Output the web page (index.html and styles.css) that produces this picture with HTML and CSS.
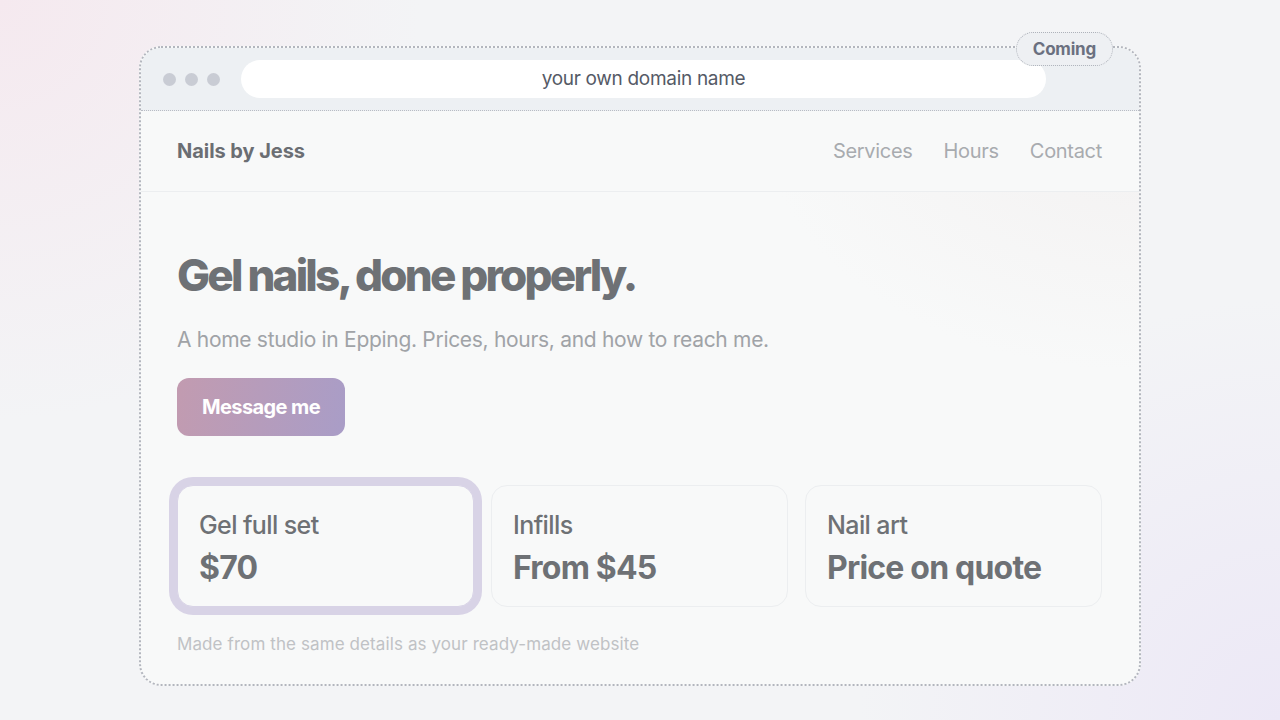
FILE: index.html
```html
<!DOCTYPE html>
<html lang="en">
<head>
  <meta charset="UTF-8">
  <title>Nails by Jess</title>
  <meta name="viewport" content="width=device-width, initial-scale=1.0">
  <link rel="stylesheet" href="styles.css">
</head>
<body>

<div class="frame">
  <div class="badge">Coming</div>

  <div class="chrome">
    <div class="dots">
      <span class="dot"></span>
      <span class="dot"></span>
      <span class="dot"></span>
    </div>
    <div class="url">your own domain name</div>
  </div>

  <div class="site">
    <div class="nav">
      <div class="brand">Nails by Jess</div>
      <div class="links">
        <a>Services</a>
        <a>Hours</a>
        <a>Contact</a>
      </div>
    </div>

    <div class="hero">
      <h1>Gel nails, done properly.</h1>
      <p class="lead">A home studio in Epping. Prices, hours, and how to reach me.</p>
      <button class="cta">Message me</button>

      <div class="cards">
        <div class="card active">
          <div class="name">Gel full set</div>
          <div class="price">$70</div>
        </div>
        <div class="card">
          <div class="name">Infills</div>
          <div class="price">From $45</div>
        </div>
        <div class="card">
          <div class="name">Nail art</div>
          <div class="price">Price on quote</div>
        </div>
      </div>

      <p class="note">Made from the same details as your ready-made website</p>
    </div>
  </div>
</div>

</body>
</html>
```

FILE: styles.css
```css
html, body {
  height: 100%;
}
body {
  margin: 0;
  font-family: "Inter", "Lato", sans-serif;
  background:
    radial-gradient(circle at 0% 0%, #f5e9ef 0, rgba(245,233,239,0) 420px),
    radial-gradient(circle at 100% 100%, #ece8f6 0, rgba(236,232,246,0) 420px),
    #f3f4f6;
  padding: 46px 0 0 139px;
  box-sizing: border-box;
}
.frame {
  position: relative;
  width: 1002px;
  height: 640px;
  box-sizing: border-box;
  border: 2px dotted #b3b6be;
  border-radius: 22px;
  background: #f8f9f9;
}
.badge {
  position: absolute;
  top: -16px;
  right: 26px;
  padding: 6px 16px;
  border: 1px dotted #aeb2ba;
  border-radius: 18px;
  background: #eef0f3;
  color: #6b7080;
  font-size: 17px;
  font-weight: 700;
  letter-spacing: -0.2px;
}
.chrome {
  display: flex;
  align-items: center;
  height: 62px;
  padding: 0 93px 0 22px;
  background: #edf0f3;
  border-bottom: 1px dotted #b9bcc4;
  border-radius: 20px 20px 0 0;
}
.dots {
  display: flex;
  gap: 9px;
  margin-right: 21px;
}
.dot {
  width: 13px;
  height: 13px;
  border-radius: 50%;
  background: #c9ccd4;
}
.url {
  flex: 1;
  height: 38px;
  line-height: 38px;
  border-radius: 19px;
  background: #fff;
  text-align: center;
  color: #555a66;
  font-size: 19px;
  letter-spacing: -0.3px;
}
.site {
  border-radius: 0 0 20px 20px;
  background:
    radial-gradient(ellipse 380px 260px at 100% 0%, #f3f1f1 0, rgba(243,241,241,0) 100%);
}
.nav {
  display: flex;
  align-items: center;
  justify-content: space-between;
  height: 80px;
  padding: 0 37px 0 36px;
  border-bottom: 1px solid #eceef0;
  background: #f8f9f9;
}
.brand {
  color: #6b6e73;
  font-size: 20px;
  font-weight: 700;
  letter-spacing: -0.05px;
}
.links {
  display: flex;
  gap: 31px;
}
.links a {
  color: #a8abaf;
  font-size: 20px;
  letter-spacing: -0.3px;
}
.hero {
  padding: 56px 37px 0 36px;
}
.hero h1 {
  margin: 0;
  color: #6e7175;
  font-size: 44px;
  font-weight: 800;
  letter-spacing: -2.8px;
  line-height: 54px;
}
.lead {
  margin: 25px 0 0;
  color: #a0a3a7;
  font-size: 21px;
  letter-spacing: -0.3px;
}
.cta {
  margin-top: 26px;
  width: 168px;
  height: 58px;
  border: none;
  border-radius: 12px;
  background: linear-gradient(100deg, #c29bb0, #a99dc7);
  color: #fff;
  font-family: inherit;
  font-size: 20px;
  font-weight: 700;
  letter-spacing: -0.6px;
}
.cards {
  display: grid;
  grid-template-columns: repeat(3, 1fr);
  gap: 17px;
  margin-top: 49px;
}
.card {
  height: 122px;
  box-sizing: border-box;
  padding: 24px 21px 0;
  border: 1px solid #eceef0;
  border-radius: 16px;
  background: #f8f9f9;
}
.card.active {
  box-shadow: 0 0 0 8px #d8d3e6;
  border-color: #d8d3e6;
}
.name {
  color: #6e7175;
  font-size: 25px;
  font-weight: 500;
  letter-spacing: -0.6px;
}
.price {
  margin-top: 8px;
  color: #6e7175;
  font-size: 32px;
  font-weight: 700;
  letter-spacing: -0.8px;
}
.note {
  margin: 27px 0 0;
  color: #c0c2c5;
  font-size: 17px;
  letter-spacing: 0.1px;
}
```
